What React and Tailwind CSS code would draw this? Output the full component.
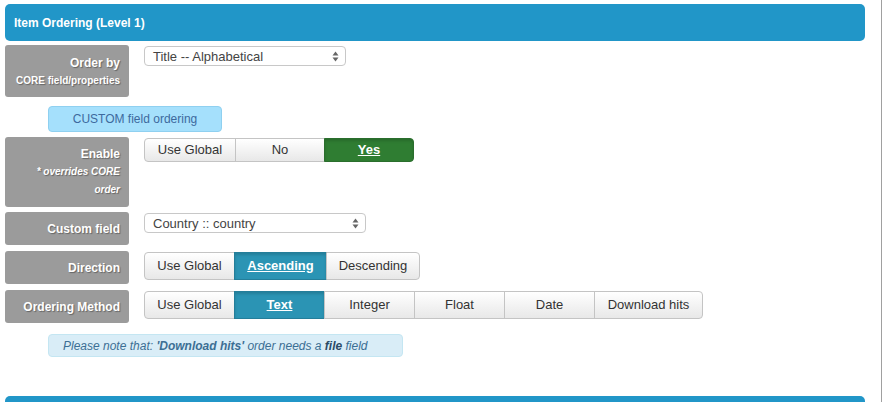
import React from 'react';

const labelCls =
    'w-[124px] shrink-0 rounded-[3px] bg-[#9b9b9b] pr-[9px] text-right font-bold text-white [text-shadow:1px_1px_1px_rgba(0,0,0,0.35)]';

const Label = ({ children, className = '' }) => (
    <div className={`${labelCls} ${className}`}>{children}</div>
);

const Select = ({ value, width }) => (
    <div
        className={`flex h-[20px] items-center justify-between rounded-[4px] border border-[#c8c8c8] bg-white pl-[8px] pr-[6px] text-[13px] text-[#444] ${width}`}
    >
        <span className="leading-none">{value}</span>
        <svg width="7" height="11" viewBox="0 0 7 11">
            <path d="M3.5 0.5 L6.5 4.5 L0.5 4.5 Z" fill="#666" />
            <path d="M3.5 10.5 L6.5 6.5 L0.5 6.5 Z" fill="#666" />
        </svg>
    </div>
);

const BtnGroup = ({ items, active, activeColor, height, widths }) => (
    <div className={`flex ${height}`}>
        {items.map((item, i) => {
            const isActive = item === active;
            const first = i === 0;
            const last = i === items.length - 1;
            return (
                <div
                    key={item}
                    className={`flex items-center justify-center border text-[13px] ${widths[i]} ${
                        first ? 'rounded-l-[4px]' : '-ml-px'
                    } ${last ? 'rounded-r-[4px]' : ''} ${
                        isActive
                            ? `${activeColor} font-bold text-white underline shadow-[inset_0_2px_3px_rgba(0,0,0,0.15)]`
                            : 'border-[#c4c4c4] bg-gradient-to-b from-white to-[#e8e8e8] text-[#333]'
                    }`}
                >
                    {item}
                </div>
            );
        })}
    </div>
);

export default function App() {
    return (
        <div className="h-[402px] w-[882px] overflow-hidden border-r border-[#a0a0a0] bg-white font-['Liberation_Sans',Arial,sans-serif]">
            <div className="pl-[5px] pt-[4px]">
                {/* Header */}
                <div className="flex h-[37px] w-[860px] items-center rounded-[5px] bg-[#2196c8] pl-[9px] text-[12px] font-bold text-white">
                    Item Ordering (Level 1)
                </div>

                {/* Order by */}
                <div className="mt-[4px] flex">
                    <Label className="h-[52px] pt-[9px]">
                        <div className="text-[12px] leading-[18px]">Order by</div>
                        <div className="text-[10px] leading-[18px]">CORE field/properties</div>
                    </Label>
                    <div className="ml-[15px] pt-px">
                        <Select value="Title -- Alphabetical" width="w-[202px]" />
                    </div>
                </div>

                {/* Custom field ordering */}
                <div className="ml-[43px] mt-[9px] flex h-[26px] w-[174px] items-center justify-center rounded-[4px] border border-[#8fd0f0] bg-[#a5e0fc] text-[12px] text-[#3d6a9e]">
                    CUSTOM field ordering
                </div>

                {/* Enable */}
                <div className="mt-[5px] flex">
                    <Label className="h-[70px] pt-[8px]">
                        <div className="text-[12px] leading-[18px]">Enable</div>
                        <div className="text-[10px] italic leading-[18px]">* overrides CORE</div>
                        <div className="text-[10px] italic leading-[18px]">order</div>
                    </Label>
                    <div className="ml-[15px] pt-px">
                        <BtnGroup
                            items={['Use Global', 'No', 'Yes']}
                            active="Yes"
                            activeColor="border-[#2a6e2d] bg-[#2f7d32]"
                            height="h-[24px]"
                            widths={['w-[92px]', 'w-[90px]', 'w-[90px]']}
                        />
                    </div>
                </div>

                {/* Custom field */}
                <div className="mt-[5px] flex">
                    <Label className="flex h-[33px] items-center justify-end text-[12px]">Custom field</Label>
                    <div className="ml-[15px] pt-px">
                        <Select value="Country :: country" width="w-[222px]" />
                    </div>
                </div>

                {/* Direction */}
                <div className="mt-[6px] flex">
                    <Label className="flex h-[33px] items-center justify-end text-[12px]">Direction</Label>
                    <div className="ml-[15px] pt-px">
                        <BtnGroup
                            items={['Use Global', 'Ascending', 'Descending']}
                            active="Ascending"
                            activeColor="border-[#247e9a] bg-[#2b94b4]"
                            height="h-[28px]"
                            widths={['w-[91px]', 'w-[93px]', 'w-[94px]']}
                        />
                    </div>
                </div>

                {/* Ordering Method */}
                <div className="mt-[6px] flex">
                    <Label className="flex h-[33px] items-center justify-end text-[12px]">Ordering Method</Label>
                    <div className="ml-[15px] pt-px">
                        <BtnGroup
                            items={['Use Global', 'Text', 'Integer', 'Float', 'Date', 'Download hits']}
                            active="Text"
                            activeColor="border-[#247e9a] bg-[#2b94b4]"
                            height="h-[28px]"
                            widths={['w-[91px]', 'w-[91px]', 'w-[91px]', 'w-[91px]', 'w-[91px]', 'w-[109px]']}
                        />
                    </div>
                </div>

                {/* Note */}
                <div className="ml-[43px] mt-[11px] flex h-[23px] w-[355px] items-center rounded-[4px] border border-[#c4e6f2] bg-[#d9edf7] pl-[14px] text-[12px] italic text-[#3c6f94]">
                    Please note that:&nbsp;<b>'Download hits'</b>&nbsp;order needs a&nbsp;<b className="text-[#2a4a66]">file</b>&nbsp;field
                </div>

                {/* Next panel header */}
                <div className="mt-[39px] h-[37px] w-[860px] rounded-[5px] bg-[#2196c8]" />
            </div>
        </div>
    );
}
